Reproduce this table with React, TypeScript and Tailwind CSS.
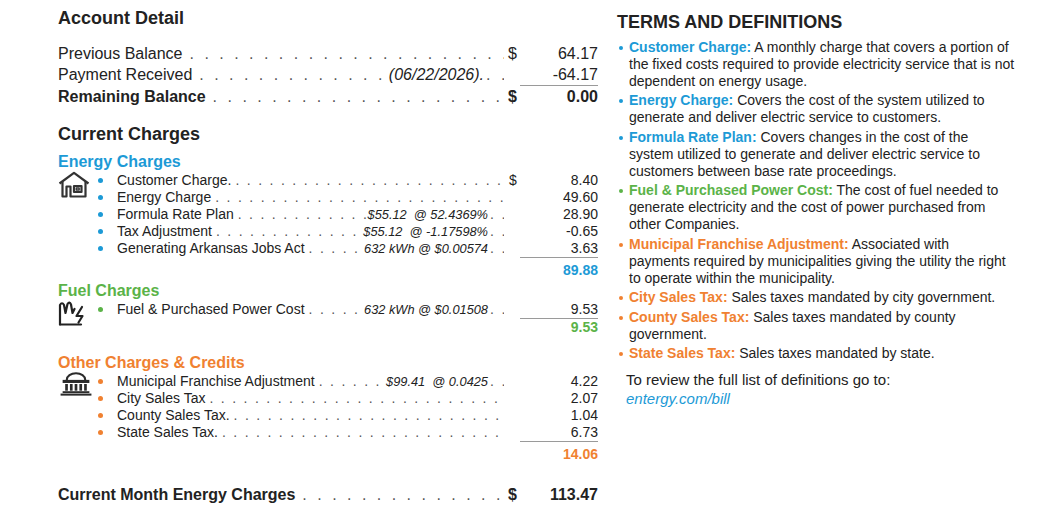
import React from "react";

type Item = {
  label: string;
  rate?: string;
  dollar?: boolean;
  value: string;
};

const energy: Item[] = [
  { label: "Customer Charge.", dollar: true, value: "8.40" },
  { label: "Energy Charge", value: "49.60" },
  { label: "Formula Rate Plan", rate: "$55.12  @ 52.4369%", value: "28.90" },
  { label: "Tax Adjustment", rate: "$55.12  @ -1.17598%", value: "-0.65" },
  { label: "Generating Arkansas Jobs Act", rate: "632 kWh @ $0.00574", value: "3.63" },
];

const fuel: Item[] = [
  { label: "Fuel & Purchased Power Cost", rate: "632 kWh @ $0.01508", value: "9.53" },
];

const other: Item[] = [
  { label: "Municipal Franchise Adjustment", rate: "$99.41  @ 0.0425", value: "4.22" },
  { label: "City Sales Tax", value: "2.07" },
  { label: "County Sales Tax.", value: "1.04" },
  { label: "State Sales Tax.", value: "6.73" },
];

const DOTS = ". ".repeat(80);

function SmallDots() {
  return (
    <span className="flex-1 min-w-0 overflow-hidden whitespace-nowrap text-[14px] font-normal tracking-[1.8px] text-[#555] px-[4px]">
      {DOTS}
    </span>
  );
}

function WideDots() {
  return (
    <span className="flex-1 min-w-0 overflow-hidden whitespace-nowrap text-[16px] font-normal tracking-[3px] text-[#555] px-[7px]">
      {DOTS}
    </span>
  );
}

function ItemRow({ item, dot }: { item: Item; dot: string }) {
  return (
    <div className="flex items-baseline h-[17px] leading-[17px] text-[14px] min-w-0 overflow-hidden">
      <span className="w-[19px] shrink-0 self-center">
        <span className={`block w-[5px] h-[5px] rounded-full ${dot}`} />
      </span>
      <span className="shrink-0">{item.label}</span>
      <SmallDots />
      {item.rate && (
        <>
          <span className="shrink-0 italic text-[12.8px] whitespace-pre">{item.rate}</span>
          <span className="w-[16px] shrink-0 overflow-hidden whitespace-nowrap text-[#555] tracking-[1.8px] pl-[2px]">
            . .
          </span>
        </>
      )}
      <span className="w-[16px] shrink-0 pl-[5px]">{item.dollar ? "$" : ""}</span>
      <span className="w-[78px] shrink-0 text-right">{item.value}</span>
    </div>
  );
}

function HouseIcon() {
  return (
    <svg width="32" height="27" viewBox="0 0 32 27" fill="none" stroke="#333" strokeWidth="2.2" strokeLinejoin="round">
      <path d="M1.5 12.5 L16 1.8 L30.5 12.5" />
      <path d="M4.5 10.5 V25.5 H8.5 V15.5 H12.5 V25.5 H27.5 V10.5" />
      <rect x="16" y="15" width="7.5" height="6" />
      <rect x="18.2" y="17" width="3" height="2" strokeWidth="1.3" />
    </svg>
  );
}

function FuelIcon() {
  return (
    <svg width="32" height="26" viewBox="0 0 32 26" fill="none" stroke="#222" strokeWidth="2.2" strokeLinejoin="round" strokeLinecap="round">
      <path d="M2 24.5 V5 Q4 1.5 6 5 L7.5 13 L9.5 4 Q11.5 1 13 4.5 L14.5 13 L16.5 9" />
      <path d="M24 7 L18.5 16 H24.5 L20.5 22.5" />
      <path d="M2 24.5 H23" />
    </svg>
  );
}

function BuildingIcon() {
  return (
    <svg width="36" height="24" viewBox="0 0 35 23" fill="#2b2b2b">
      <path d="M8.5 7.5 A9 6.5 0 0 1 26.5 7.5" fill="none" stroke="#2b2b2b" strokeWidth="2" />
      <rect x="4.5" y="7.5" width="26" height="3" />
      <rect x="7" y="11.5" width="2.6" height="6.5" />
      <rect x="11.6" y="11.5" width="2.6" height="6.5" />
      <rect x="16.2" y="11.5" width="2.6" height="6.5" />
      <rect x="20.8" y="11.5" width="2.6" height="6.5" />
      <rect x="25.4" y="11.5" width="2.6" height="6.5" />
      <rect x="4.5" y="18.5" width="26" height="1.8" />
      <rect x="2.5" y="20.8" width="30" height="2" />
    </svg>
  );
}

function ChargeGroup({
  title,
  titleColor,
  dot,
  totalColor,
  icon,
  items,
  total,
  totalPad,
}: {
  title: string;
  titleColor: string;
  dot: string;
  totalColor: string;
  icon: React.ReactNode;
  items: Item[];
  total: string;
  totalPad: string;
}) {
  return (
    <div>
      <h3 className={`text-[16px] leading-[20px] font-bold ${titleColor}`}>{title}</h3>
      <div className="flex">
        <div className="w-[40px] shrink-0 -mt-[1px]">{icon}</div>
        <div className="flex-1 min-w-0">
          {items.map((it) => (
            <ItemRow key={it.label} item={it} dot={dot} />
          ))}
          <div className="flex justify-end">
            <span
              className={`w-[78px] text-right border-t border-[#9a9a9a] font-bold text-[14px] leading-[17px] ${totalPad} ${totalColor}`}
            >
              {total}
            </span>
          </div>
        </div>
      </div>
    </div>
  );
}

function AccountRow({
  label,
  rate,
  dollar,
  value,
  bold,
  rule,
}: {
  label: string;
  rate?: string;
  dollar?: boolean;
  value: string;
  bold?: boolean;
  rule?: boolean;
}) {
  return (
    <div className={`flex items-baseline leading-[21px] text-[16px] min-w-0 overflow-hidden ${bold ? "font-bold" : ""}`}>
      <span className="shrink-0">{label}</span>
      <WideDots />
      {rate && (
        <>
          <span className="shrink-0 italic">{rate}</span>
          <span className="w-[20px] shrink-0 overflow-hidden whitespace-nowrap text-[#555] tracking-[3px] pl-[2px]">
            . .
          </span>
        </>
      )}
      <span className="w-[16px] shrink-0 pl-[4px]">{dollar ? "$" : ""}</span>
      <span className={`w-[78px] shrink-0 text-right ${rule ? "border-t border-[#9a9a9a]" : ""}`}>{value}</span>
    </div>
  );
}

type Term = { term: string; lines: string[]; color: string; dot: string };

const terms: Term[] = [
  {
    term: "Customer Charge:",
    lines: [
      "A monthly charge that covers a portion of",
      "the fixed costs required to provide electricity service that is not",
      "dependent on energy usage.",
    ],
    color: "text-[#1c9ad6]",
    dot: "bg-[#1c9ad6]",
  },
  {
    term: "Energy Charge:",
    lines: ["Covers the cost of the system utilized to", "generate and deliver electric service to customers."],
    color: "text-[#1c9ad6]",
    dot: "bg-[#1c9ad6]",
  },
  {
    term: "Formula Rate Plan:",
    lines: [
      "Covers changes in the cost of the",
      "system utilized to generate and deliver electric service to",
      "customers between base rate proceedings.",
    ],
    color: "text-[#1c9ad6]",
    dot: "bg-[#1c9ad6]",
  },
  {
    term: "Fuel & Purchased Power Cost:",
    lines: [
      "The cost of fuel needed to",
      "generate electricity and the cost of power purchased from",
      "other Companies.",
    ],
    color: "text-[#5bb348]",
    dot: "bg-[#5bb348]",
  },
  {
    term: "Municipal Franchise Adjustment:",
    lines: [
      "Associated with",
      "payments required by municipalities giving the utility the right",
      "to operate within the municipality.",
    ],
    color: "text-[#f08131]",
    dot: "bg-[#f08131]",
  },
  {
    term: "City Sales Tax:",
    lines: ["Sales taxes mandated by city government."],
    color: "text-[#f08131]",
    dot: "bg-[#f08131]",
  },
  {
    term: "County Sales Tax:",
    lines: ["Sales taxes mandated by county", "government."],
    color: "text-[#f08131]",
    dot: "bg-[#f08131]",
  },
  {
    term: "State Sales Tax:",
    lines: ["Sales taxes mandated by state."],
    color: "text-[#f08131]",
    dot: "bg-[#f08131]",
  },
];

export default function App() {
  return (
    <div className="w-[1046px] h-[517px] bg-white flex pl-[58px] text-[#222] font-['Liberation_Sans',Arial,sans-serif] overflow-hidden">
      {/* left: account + charges */}
      <div className="w-[540px] shrink-0 pt-[7px]">
        <h2 className="text-[18px] leading-[22px] font-bold">Account Detail</h2>
        <div className="mt-[13.5px]">
          <AccountRow label="Previous Balance" dollar value="64.17" />
          <AccountRow label="Payment Received" rate="(06/22/2026)." value="-64.17" />
          <AccountRow label="Remaining Balance" dollar value="0.00" bold rule />
        </div>

        <h2 className="mt-[16.5px] text-[18px] leading-[22px] font-bold">Current Charges</h2>
        <div className="mt-[7px]">
          <ChargeGroup
            title="Energy Charges"
            titleColor="text-[#1c9ad6]"
            dot="bg-[#1c9ad6]"
            totalColor="text-[#1c9ad6]"
            icon={<HouseIcon />}
            items={energy}
            total="89.88"
            totalPad="pt-[4px]"
          />
        </div>
        <div className="mt-[2px]">
          <ChargeGroup
            title="Fuel Charges"
            titleColor="text-[#5bb348]"
            dot="bg-[#5bb348]"
            totalColor="text-[#5bb348]"
            icon={<FuelIcon />}
            items={fuel}
            total="9.53"
            totalPad="pt-0"
          />
        </div>
        <div className="mt-[17px]">
          <ChargeGroup
            title="Other Charges & Credits"
            titleColor="text-[#f08131]"
            dot="bg-[#f08131]"
            totalColor="text-[#f08131]"
            icon={<BuildingIcon />}
            items={other}
            total="14.06"
            totalPad="pt-[4px]"
          />
        </div>

        <div className="mt-[20.5px]">
          <AccountRow label="Current Month Energy Charges" dollar value="113.47" bold />
        </div>
      </div>

      {/* right: terms */}
      <div className="ml-[19px] w-[410px] shrink-0 pt-[11px]">
        <h2 className="text-[18px] leading-[22px] font-bold">TERMS AND DEFINITIONS</h2>
        <ul className="mt-[5.5px] flex flex-col gap-[2.5px]">
          {terms.map((t) => (
            <li key={t.term} className="flex text-[14px] leading-[17px] whitespace-nowrap">
              <span className="w-[12px] shrink-0 pt-[7px] pl-[2px]">
                <span className={`block w-[4px] h-[4px] rounded-full ${t.dot}`} />
              </span>
              <div>
                {t.lines.map((line, i) =>
                  i === 0 ? (
                    <p key={i}>
                      <span className={`font-bold ${t.color}`}>{t.term}</span> {line}
                    </p>
                  ) : (
                    <p key={i}>{line}</p>
                  )
                )}
              </div>
            </li>
          ))}
        </ul>
        <div className="mt-[8px] ml-[9px] text-[15px] leading-[19px]">
          <p>To review the full list of definitions go to:</p>
          <p className="italic text-[#1c9ad6]">entergy.com/bill</p>
        </div>
      </div>
    </div>
  );
}
